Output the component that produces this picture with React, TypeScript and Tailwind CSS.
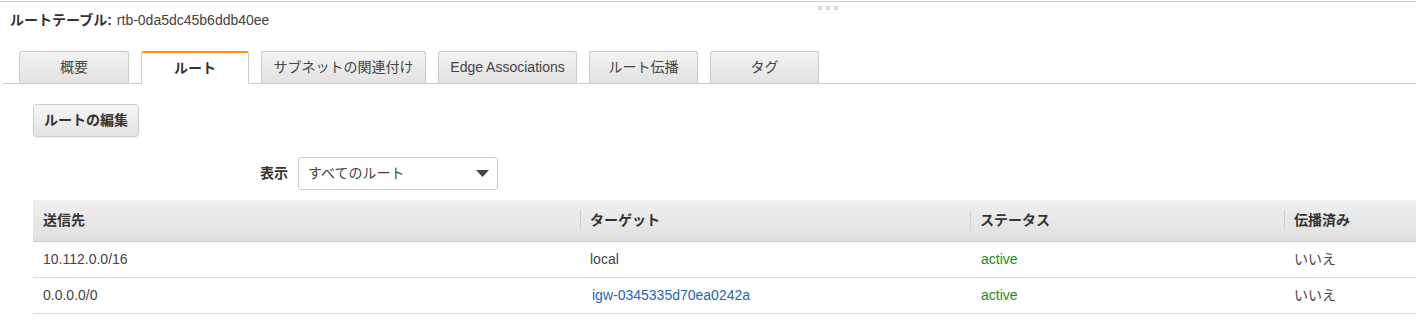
import React from 'react';

type Route = { dest: string; target: string; link?: boolean; status: string; propagated: string };

const tabs = [
  { label: '概要', w: 'w-[110px]' },
  { label: 'ルート', w: 'w-[108px]', active: true },
  { label: 'サブネットの関連付け', w: 'w-[165px]' },
  { label: 'Edge Associations', w: 'w-[139px]' },
  { label: 'ルート伝播', w: 'w-[109px]' },
  { label: 'タグ', w: 'w-[109px]' },
];

const routes: Route[] = [
  { dest: '10.112.0.0/16', target: 'local', status: 'active', propagated: 'いいえ' },
  { dest: '0.0.0.0/0', target: 'igw-0345335d70ea0242a', link: true, status: 'active', propagated: 'いいえ' },
];

const headers = ['送信先', 'ターゲット', 'ステータス', '伝播済み'];

export default function App() {
  return (
    <div className="w-[1416px] h-[326px] overflow-hidden bg-white pt-[1px] text-[14px] text-[#333] font-['Liberation_Sans','Noto_Sans_CJK_JP',sans-serif]">
      <div className="relative border-t border-[#ccc]">
        {/* drag handle */}
        <div className="absolute left-[818px] top-[4px] flex gap-[4px]">
          <span className="h-[4px] w-[4px] rounded-[1px] border border-[#c4c4c4] bg-[#eee]" />
          <span className="h-[4px] w-[4px] rounded-[1px] border border-[#c4c4c4] bg-[#eee]" />
          <span className="h-[4px] w-[4px] rounded-[1px] border border-[#c4c4c4] bg-[#eee]" />
        </div>

        <div className="flex h-[36px] items-center pl-[10px] leading-none">
          <span className="font-bold text-[#333]">ルートテーブル:</span>
          <span className="ml-[5px] text-[#444]">rtb-0da5dc45b6ddb40ee</span>
        </div>

        <div className="ml-[3px] mt-[13px] flex items-end gap-[12px] border-b border-[#ccc] pl-[16px]">
          {tabs.map(t =>
            t.active ? (
              <div
                key={t.label}
                className={`${t.w} -mb-px flex h-[33px] items-center justify-center rounded-t-[3px] border border-b-0 border-[#ccc] border-t-2 border-t-[#f90] bg-white pb-[2px] font-bold text-[#333] leading-none`}
              >
                {t.label}
              </div>
            ) : (
              <div
                key={t.label}
                className={`${t.w} flex h-[32px] items-center justify-center rounded-t-[3px] border border-b-0 border-[#ccc] bg-gradient-to-b from-[#f3f3f3] to-[#e2e2e2] pb-[1px] text-[#444] leading-none`}
              >
                {t.label}
              </div>
            )
          )}
        </div>

        <div className="pl-[33px] pt-[20px]">
          <button className="h-[33px] w-[106px] rounded-[4px] border border-[#ccc] bg-gradient-to-b from-[#f6f6f6] to-[#e4e4e4] pb-[1px] font-bold text-[#333] leading-none shadow-[0_1px_1px_rgba(0,0,0,0.08)]">
            ルートの編集
          </button>
        </div>

        <div className="mt-[20px] flex items-center pl-[260px]">
          <span className="pb-[1px] font-bold text-[#333] leading-none">表示</span>
          <div className="ml-[10px] flex h-[33px] w-[200px] items-center justify-between rounded-[3px] border border-[#ccc] bg-white pb-[1px] pl-[9px] pr-[8px] text-[#444] leading-none">
            <span>すべてのルート</span>
            <svg width="13" height="7" viewBox="0 0 13 7">
              <path d="M0 0 H13 L6.5 7 Z" fill="#444" />
            </svg>
          </div>
        </div>

        <div className="ml-[33px] mt-[10px]">
          <div className="grid h-[42px] grid-cols-[547px_390px_314px_1fr] border-b border-[#c8c8c8] bg-gradient-to-b from-[#f0f0f0] to-[#e0e0e0]">
            {headers.map((h, i) => (
              <div key={h} className="flex items-center pb-[2px]">
                {i > 0 && <span className="h-[20px] w-px bg-[#cfcfcf]" />}
                <span className={`${i > 0 ? 'ml-[9px]' : 'ml-[10px]'} font-bold text-[#333] leading-none`}>{h}</span>
              </div>
            ))}
          </div>
          {routes.map(r => (
            <div key={r.dest} className="grid h-[36px] grid-cols-[547px_390px_314px_1fr] items-center border-b border-[#ddd] pb-[1px] leading-none text-[#444]">
              <span className="pl-[10px]">{r.dest}</span>
              <span className={r.link ? 'pl-[12px] text-[#2266bb]' : 'pl-[10px]'}>{r.target}</span>
              <span className="pl-[11px] text-[#1d8a1d]">{r.status}</span>
              <span className="pl-[10px]">{r.propagated}</span>
            </div>
          ))}
        </div>
      </div>
    </div>
  );
}
